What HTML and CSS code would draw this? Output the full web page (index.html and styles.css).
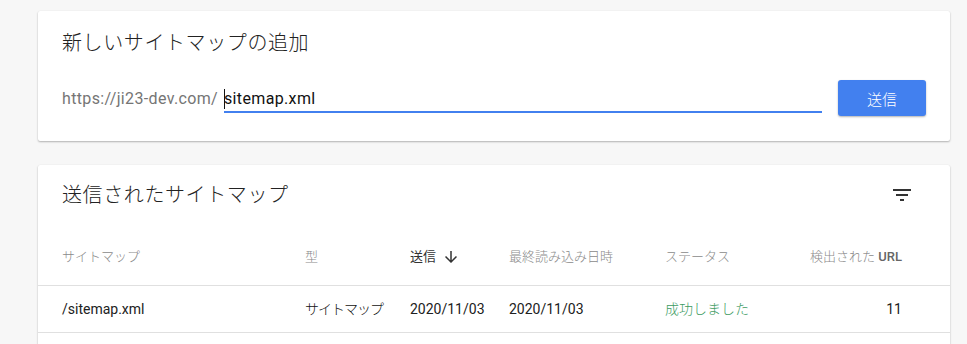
FILE: index.html
```html
<!DOCTYPE html>
<html lang="ja">
<head>
    <meta charset="UTF-8">
    <meta name="viewport" content="width=device-width, initial-scale=1.0">
    <title>サイトマップ</title>
    <link rel="stylesheet" href="styles.css">
</head>
<body>

    <div class="page">

        <div class="card add-card">
            <h2 class="card-title">新しいサイトマップの追加</h2>
            <div class="add-row">
                <span class="url-prefix">https://ji23-dev.com/</span>
                <div class="url-field"><span class="caret"></span>sitemap.xml</div>
                <button class="send-btn">送信</button>
            </div>
        </div>

        <div class="card list-card">
            <div class="list-head">
                <h2 class="card-title">送信されたサイトマップ</h2>
                <button class="icon-btn" title="フィルタ">
                    <svg width="24" height="24" viewBox="0 0 24 24">
                        <path d="M10 18h4v-2h-4v2zM3 6v2h18V6H3zm3 7h12v-2H6v2z" fill="#333"/>
                    </svg>
                </button>
            </div>

            <div class="table">
                <div class="row head-row">
                    <span>サイトマップ</span>
                    <span>型</span>
                    <span class="sorted">送信
                        <svg width="18" height="18" viewBox="0 0 24 24">
                            <path d="M20 12l-1.41-1.41L13 16.17V4h-2v12.17l-5.58-5.59L4 12l8 8 8-8z" fill="#333"/>
                        </svg>
                    </span>
                    <span>最終読み込み日時</span>
                    <span>ステータス</span>
                    <span class="num">検出された <b>URL</b></span>
                </div>
                <div class="row">
                    <span>/sitemap.xml</span>
                    <span class="kana">サイトマップ</span>
                    <span>2020/11/03</span>
                    <span>2020/11/03</span>
                    <span class="ok">成功しました</span>
                    <span class="num">11</span>
                </div>
            </div>
        </div>

    </div>

</body>
</html>
```

FILE: styles.css
```css
body {
    margin: 0;
    background-color: #f7f7f7;
    font-family: Roboto, "Noto Sans CJK JP", sans-serif;
    color: #212121;
}

.page {
    padding: 11px 17px 0 38px;
    display: flex;
    flex-direction: column;
    gap: 24px;
}

.card {
    background-color: #fff;
    border-radius: 2px;
    box-shadow: 0 1px 2px rgba(0, 0, 0, 0.28), 0 0 1px rgba(0, 0, 0, 0.08);
}

.card-title {
    margin: 0;
    font-size: 20px;
    font-weight: 300;
    line-height: 24px;
    letter-spacing: 0.6px;
    color: #222;
}

/* add sitemap */
.add-card {
    padding: 20px 24px 25px;
}

.add-row {
    display: flex;
    align-items: flex-start;
    margin-top: 25px;
}

.url-prefix {
    font-size: 16px;
    line-height: 20px;
    letter-spacing: 0.35px;
    padding-top: 9px;
    color: #757575;
    margin-right: 6px;
}

.url-field {
    flex: 1;
    font-size: 16px;
    line-height: 20px;
    letter-spacing: 0.35px;
    padding: 9px 0 2px;
    border-bottom: 2px solid #4280ef;
    color: #111;
    display: flex;
}

.caret {
    width: 1px;
    height: 20px;
    background-color: #111;
    margin-right: -1px;
}

.send-btn {
    margin-left: 16px;
    width: 88px;
    height: 36px;
    border: none;
    border-radius: 3px;
    background-color: #4280ef;
    color: #fff;
    font-family: Roboto, "Noto Sans CJK JP", sans-serif;
    font-size: 15px;
    font-weight: 300;
    box-shadow: 0 1px 2px rgba(0, 0, 0, 0.3);
    cursor: pointer;
}

/* submitted sitemaps */
.list-card {
    padding-bottom: 20px;
}

.list-head {
    display: flex;
    justify-content: space-between;
    align-items: center;
    padding: 6px 24px 0;
}

.icon-btn {
    width: 48px;
    height: 48px;
    border: none;
    background: none;
    padding: 12px;
    cursor: pointer;
}

.icon-btn svg {
    display: block;
}

.row {
    display: grid;
    grid-template-columns: 243px 105px 99px 156px 1fr;
    padding: 13px 48px 13px 24px;
    border-bottom: 1px solid #e0e0e0;
    font-size: 14px;
    line-height: 20px;
}

.row span:nth-child(5) {
    grid-column: 5;
    grid-row: 1;
}

.row span:nth-child(6) {
    grid-column: 5;
    grid-row: 1;
    justify-self: end;
}

.head-row {
    padding-top: 28px;
    padding-bottom: 18px;
    font-size: 13px;
    font-weight: 300;
    color: #8a8a8a;
}

.head-row b {
    font-weight: 500;
    color: #666;
}

.sorted {
    color: #333;
    font-weight: 400;
    display: flex;
    align-items: center;
}

.sorted svg {
    margin-left: 6px;
}

.kana {
    letter-spacing: -1px;
    font-weight: 300;
    color: #111;
}

.ok {
    color: #3d9b5f;
    font-weight: 300;
}
```
